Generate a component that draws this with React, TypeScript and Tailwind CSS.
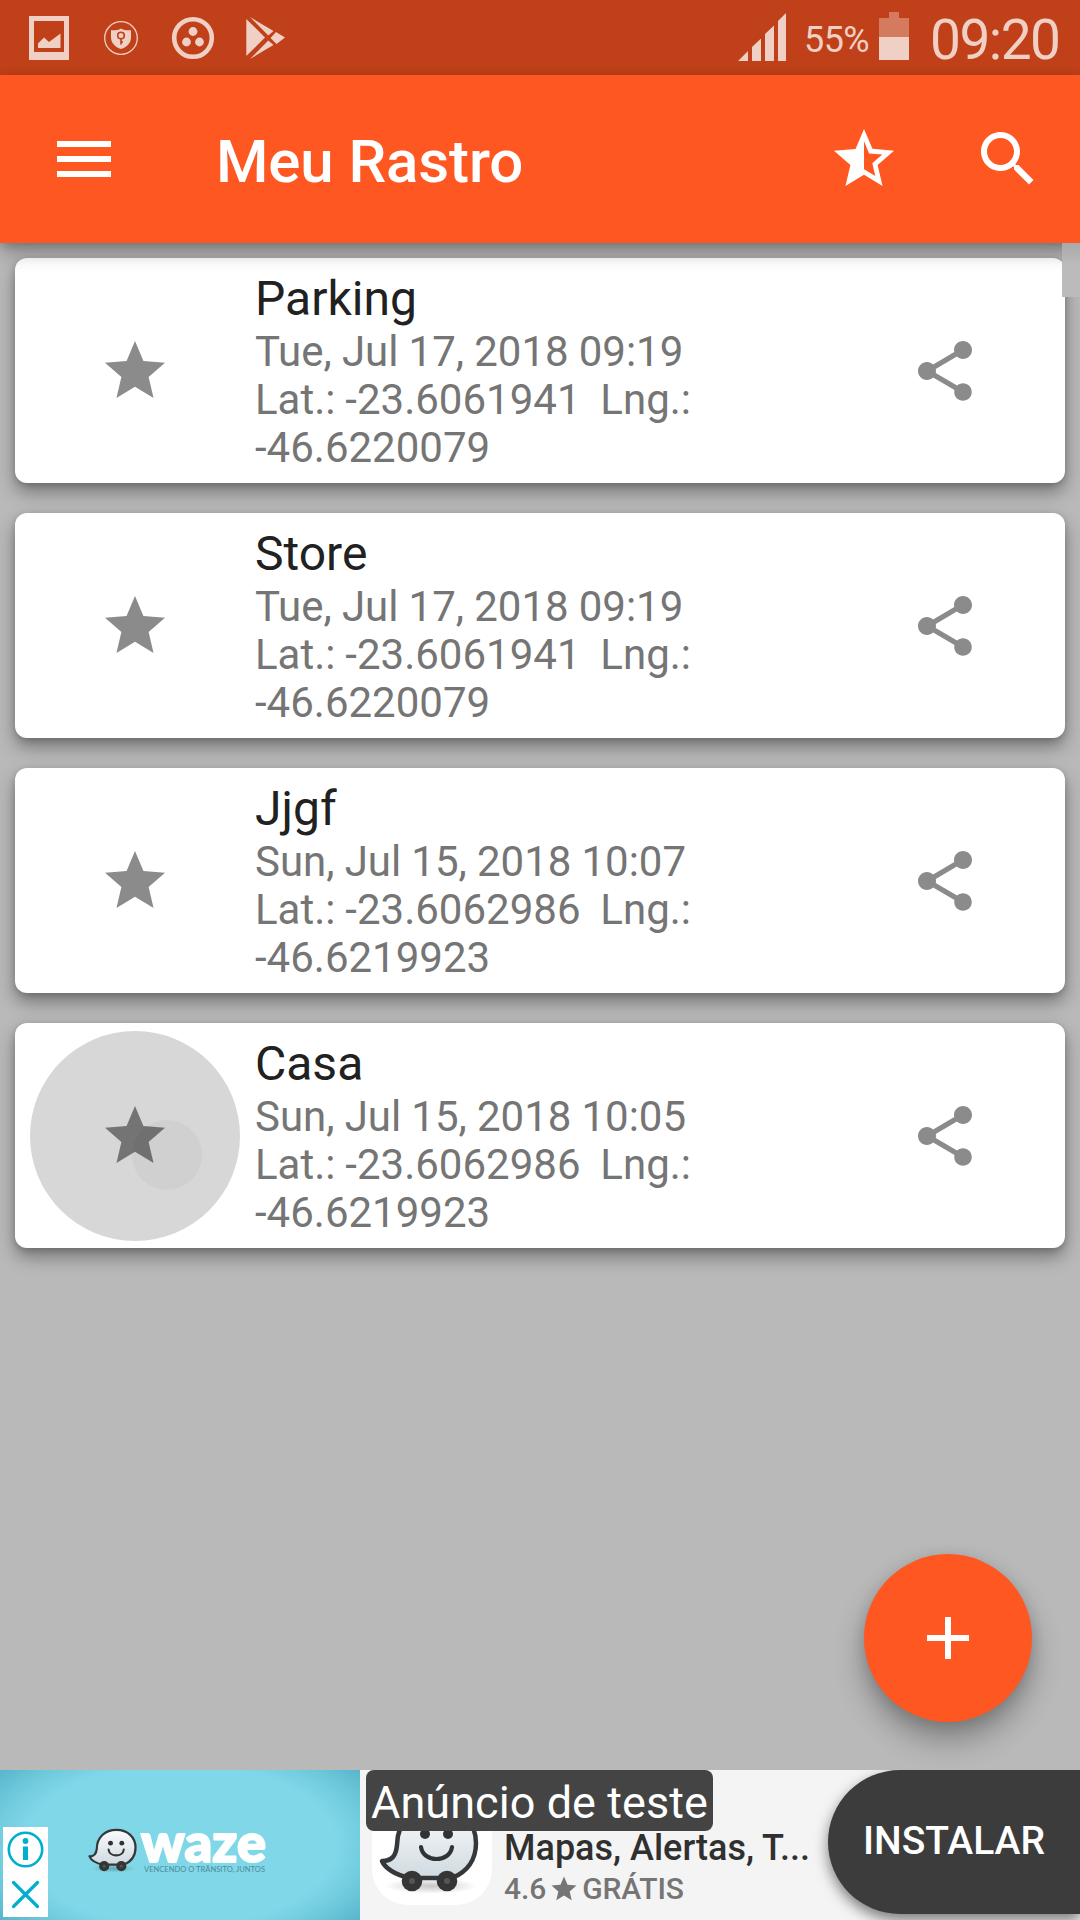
import React from "react";

const STAR = "M12 17.27L18.18 21l-1.64-7.03L22 9.24l-7.19-.61L12 2 9.19 8.63 2 9.24l5.46 4.73L5.82 21z";

type Place = { name: string; date: string; lat: string; lng: string; pressed?: boolean };

const places: Place[] = [
  { name: "Parking", date: "Tue, Jul 17, 2018 09:19", lat: "-23.6061941", lng: "-46.6220079" },
  { name: "Store", date: "Tue, Jul 17, 2018 09:19", lat: "-23.6061941", lng: "-46.6220079" },
  { name: "Jjgf", date: "Sun, Jul 15, 2018 10:07", lat: "-23.6062986", lng: "-46.6219923" },
  { name: "Casa", date: "Sun, Jul 15, 2018 10:05", lat: "-23.6062986", lng: "-46.6219923", pressed: true },
];

function Icon({ d, className }: { d: string; className?: string }) {
  return (
    <svg viewBox="0 0 24 24" className={className} fill="currentColor">
      <path d={d} />
    </svg>
  );
}

function StatusBar() {
  return (
    <div className="flex h-[75px] shrink-0 items-start bg-[#bf4019] text-[#f0cfc5]">
      <svg className="h-[75px] w-[300px]" viewBox="0 0 300 75" fill="currentColor">
        <path fillRule="evenodd" d="M29 16H69V60H29ZM34 21V52H64V21Z" />
        <path d="M38 48V43.5L44 37.5L49 42L60.5 33.500V48Z" />
        <circle cx="121" cy="38" r="16.300" fill="none" stroke="currentColor" strokeWidth="1.300" />
        <path d="M121 28.500C124 30.300 127 30.300 131 30.200V37C131 43 127 47 121 49C115 47 111 43 111 37V30.200C115 30.300 118 30.300 121 28.500Z" />
        <circle cx="121" cy="35.500" r="3.300" fill="none" stroke="#bf4019" strokeWidth="1.600" />
        <path d="M121 38.500V44.500M121 42H123" stroke="#bf4019" strokeWidth="1.600" />
        <circle cx="193" cy="38" r="18.800" fill="none" stroke="currentColor" strokeWidth="4.600" />
        <circle cx="193" cy="31.500" r="4.400" />
        <circle cx="186.500" cy="42" r="4.400" />
        <circle cx="199.500" cy="42" r="4.400" />
        <path d="M246.300 19L265 37.500L246.300 56Z" />
        <path d="M250 17L273.500 31L268.300 35.500Z" />
        <path d="M250 59L273.500 45L268.300 40.500Z" />
        <path d="M276 32L285 37.500L276.500 44L270.500 38Z" />
      </svg>
      <div className="flex-1" />
      <svg className="mr-[17px] h-[75px] w-[49px]" viewBox="0 0 49 75" fill="currentColor">
        <path d="M0 61L10 51V61ZM14 61V47L23 38.500V61ZM27 61V34L36 25.500V61ZM40 61V21L48 13V61Z" />
      </svg>
      <span className="mt-[19px] w-[75px] text-[36px] leading-[42px] tracking-[-0.6px]">55%</span>
      <svg className="h-[75px] w-[30px]" viewBox="0 0 30 75">
        <path d="M10 12H20V18H30V37H0V18H10Z" fill="#d47a5e" />
        <path d="M0 37H30V60H0Z" fill="currentColor" />
      </svg>
      <span className="ml-[21px] mt-[8px] w-[150px] text-[55px] leading-[64px] tracking-[-1.500px]">09:20</span>
    </div>
  );
}

function Toolbar() {
  return (
    <header className="relative z-10 flex h-[168px] shrink-0 items-center bg-[#ff5722] pl-[48px] pr-[36px] text-white shadow-[0_10px_18px_-1px_rgba(0,0,0,0.3),0_2px_8px_rgba(0,0,0,0.15)]">
      <Icon className="size-[72px]" d="M3 18h18v-2H3v2zm0-5h18v-2H3v2zm0-7v2h18V6H3z" />
      <h1 className="ml-[96px] mt-[6px] flex-1 text-[60px] font-medium leading-[70px] tracking-[-0.12px]">Meu Rastro</h1>
      <Icon
        className="mr-[72px] size-[72px]"
        d="M22 9.24l-7.190-.62L12 2 9.190 8.630 2 9.240l5.460 4.730L5.820 21 12 17.270 18.180 21l-1.630-7.030L22 9.240zM12 15.400V6.100l1.710 4.040 4.380.38-3.320 2.880 1 4.280L12 15.400z"
      />
      <Icon
        className="size-[72px]"
        d="M15.500 14h-.79l-.28-.27C15.410 12.590 16 11.110 16 9.500 16 5.910 13.090 3 9.500 3S3 5.910 3 9.500 5.910 16 9.500 16c1.610 0 3.090-.59 4.230-1.570l.27.28v.79l5 4.990L20.490 19l-4.990-5zm-6 0C7.010 14 5 11.990 5 9.500S7.010 5 9.500 5 14 7.010 14 9.500 11.990 14 9.500 14z"
      />
    </header>
  );
}

function PlaceCard({ place }: { place: Place }) {
  return (
    <article className="flex h-[225px] items-center rounded-[12px] bg-white px-[15px] shadow-[0_9px_18px_rgba(0,0,0,0.36),0_2px_6px_rgba(0,0,0,0.16)]">
      <div
        className={
          place.pressed
            ? "relative flex size-[210px] items-center justify-center rounded-full bg-[#d7d7d7] text-[#747474]"
            : "relative flex size-[210px] items-center justify-center rounded-full text-[#8b8b8b]"
        }
      >
        <Icon className="size-[72px]" d={STAR} />
        {place.pressed && <div className="absolute left-[102px] top-[89px] size-[70px] rounded-full bg-black/[0.03]" />}
      </div>
      <div className="ml-[15px] flex-1 self-start pt-[12px]">
        <h2 className="mb-px text-[48px] leading-[57px] text-[#212121]">{place.name}</h2>
        <p className="text-[42px] leading-[48px] text-[#757575] [word-spacing:-0.3px]">{place.date}</p>
        <p className="whitespace-pre text-[42px] leading-[48px] text-[#757575] [word-spacing:-0.5px]">{`Lat.: ${place.lat}  Lng.:`}</p>
        <p className="text-[42px] leading-[48px] text-[#757575]">{place.lng}</p>
      </div>
      <Icon
        className="mr-[69px] size-[72px] text-[#8b8b8b]"
        d="M18 16.080c-.76 0-1.440.3-1.960.77L8.910 12.700c.05-.23.09-.46.09-.7s-.04-.47-.09-.7l7.050-4.110c.54.5 1.250.81 2.040.81 1.660 0 3-1.340 3-3s-1.340-3-3-3-3 1.340-3 3c0 .24.04.47.09.7L8.040 9.810C7.500 9.310 6.790 9 6 9c-1.660 0-3 1.340-3 3s1.340 3 3 3c.79 0 1.500-.31 2.040-.81l7.120 4.160c-.05.21-.08.43-.08.65 0 1.610 1.310 2.920 2.920 2.920 1.610 0 2.920-1.310 2.920-2.920s-1.310-2.920-2.920-2.920z"
      />
    </article>
  );
}

/* Smiling speech-bubble mascot on two wheels, in a 100 x 88 box. */
function Mascot({ className }: { className?: string }) {
  return (
    <svg viewBox="0 0 100 88" className={className}>
      <defs>
        <linearGradient id="mascotBody" x1="0" y1="0" x2="0" y2="1">
          <stop offset="0" stopColor="#fbfcfd" />
          <stop offset="1" stopColor="#cfdae0" />
        </linearGradient>
        <radialGradient id="mascotShade">
          <stop offset="0" stopColor="#000" stopOpacity="0.22" />
          <stop offset="1" stopColor="#000" stopOpacity="0" />
        </radialGradient>
      </defs>
      <ellipse cx="52" cy="82" rx="46" ry="8" fill="url(#mascotShade)" />
      <path
        d="M3 57C13 57 17 52 18 41C18 18 35 3 58 3C81 3 97 18 97 39C97 56 88 68 73 74H31C16 71 6 64 3 57Z"
        fill="url(#mascotBody)"
        stroke="#35383b"
        strokeWidth="4.500"
        strokeLinejoin="round"
      />
      <circle cx="46" cy="30" r="5" fill="#303336" />
      <circle cx="69" cy="30" r="5" fill="#303336" />
      <path d="M42 43C44 59 71 59 73 43" fill="none" stroke="#303336" strokeWidth="4.200" strokeLinecap="round" />
      <circle cx="33" cy="77" r="10.300" fill="#353535" />
      <circle cx="68" cy="77" r="10.300" fill="#353535" />
      <circle cx="33" cy="77" r="3" fill="#555" />
      <circle cx="68" cy="77" r="3" fill="#555" />
    </svg>
  );
}

function AdBanner() {
  return (
    <footer className="flex h-[150px] shrink-0 overflow-hidden bg-[#f4f4f4]">
      <div className="relative flex h-[150px] w-[360px] items-start bg-[radial-gradient(ellipse_210px_110px_at_50%_50%,#80d7e7_0%,#80d7e7_74%,#6fcbdc_90%,#58b4ca_110%)]">
        <Mascot className="ml-[88px] mt-[58px] h-[44px] w-[49px]" />
        <svg className="ml-[2px] mt-[40px] h-[70px] w-[130px] overflow-visible" viewBox="0 0 130 70">
          <text x="2" y="51.500" textLength="125" lengthAdjust="spacingAndGlyphs" fill="#fff" stroke="#fff" strokeWidth="2" strokeLinejoin="round" fontFamily="Lato" fontWeight="900" fontSize="54">waze</text>
          <text x="5" y="61.500" textLength="121" lengthAdjust="spacingAndGlyphs" fill="#4a8b9a" fontFamily="Lato" fontSize="7.500">VENCENDO O TRÂNSITO, JUNTOS</text>
        </svg>
        <div className="absolute left-[3px] top-[57px] flex h-[90px] w-[45px] flex-col bg-white">
          <svg viewBox="0 0 45 90" fill="none" stroke="#00aecd">
            <circle cx="22.500" cy="22.500" r="16.700" strokeWidth="2.600" />
            <circle cx="22.500" cy="14" r="2.900" fill="#00aecd" stroke="none" />
            <path d="M20 19.500H25V33H20Z" fill="#00aecd" stroke="none" />
            <path d="M10.500 55.500L34.500 79.500M34.500 55.500L10.500 79.500" strokeWidth="3.200" strokeLinecap="round" />
          </svg>
        </div>
      </div>
      <div className="relative flex flex-1 items-start pl-[12px]">
        <div className="mt-[15px] flex size-[120px] items-start justify-center rounded-[36px] bg-white">
          <Mascot className="ml-[-6px] mt-[18px] h-[90px] w-[100px]" />
        </div>
        <div className="ml-[12px] mt-[57px]">
          <div className="text-[36px] font-medium leading-[42px] text-[#303030]">Mapas, Alertas, T...</div>
          <div className="flex items-center text-[30px] font-medium leading-[40px] tracking-[-0.1px] text-[#757575]">
            <span>4.6</span>
            <Icon className="mx-[3px] size-[30px]" d={STAR} />
            <span>GRÁTIS</span>
          </div>
        </div>
        <div className="absolute left-[6px] top-0 h-[61px] w-[347px] whitespace-nowrap rounded-[8px] bg-[#444] pl-[5px] text-[45px] leading-[65px] tracking-[0.06px] text-white">
          Anúncio de teste
        </div>
      </div>
      <div className="flex h-[144px] w-[252px] items-center rounded-l-full bg-[#3c3c3c] pb-[2px] pl-[35px] text-[39px] font-medium text-white shadow-[0_6px_14px_rgba(0,0,0,0.5)]">
        INSTALAR
      </div>
    </footer>
  );
}

export default function App() {
  return (
    <div className="relative flex h-[1920px] w-[1080px] flex-col overflow-hidden bg-[#b9b9b9] font-[Roboto,sans-serif]">
      <StatusBar />
      <Toolbar />
      <main className="relative flex flex-1 flex-col gap-[30px] p-[15px]">
        {places.map((p) => (
          <PlaceCard key={p.name} place={p} />
        ))}
        <div className="absolute right-0 top-0 z-20 h-[54px] w-[18px] bg-[linear-gradient(#a9a9a9,#bbb_22px)]" />
        <button className="absolute bottom-[48px] right-[48px] flex size-[168px] items-center justify-center rounded-full bg-[#ff5722] text-white shadow-[0_18px_30px_rgba(0,0,0,0.3),0_3px_14px_rgba(0,0,0,0.12)]">
          <Icon className="size-[72px]" d="M19 13h-6v6h-2v-6H5v-2h6V5h2v6h6v2z" />
        </button>
      </main>
      <AdBanner />
    </div>
  );
}
